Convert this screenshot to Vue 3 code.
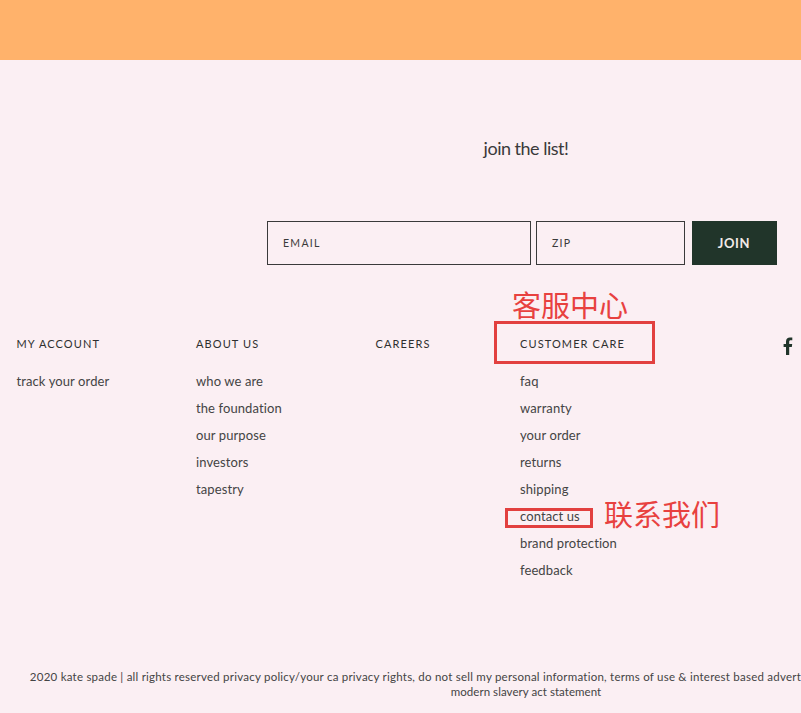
<template>
  <div class="page">
    <div class="banner"></div>
    <footer class="footer">
      <h2 class="join-title">join the list!</h2>
      <form class="join-form" @submit.prevent>
        <div class="field email">EMAIL</div>
        <div class="field zip">ZIP</div>
        <button class="join-btn" type="button">JOIN</button>
      </form>
      <div class="columns">
        <div v-for="col in columns" :key="col.title" class="col" :class="col.cls">
          <h3 class="col-title">{{ col.title }}</h3>
          <ul class="links">
            <li v-for="link in col.links" :key="link">{{ link }}</li>
          </ul>
        </div>
        <div class="social">
          <svg width="10" height="18" viewBox="0 0 10 18">
            <path d="M3 18V10H0.6V7H3V4.6C3 1.8 4.6 0.4 7 0.4C8 0.4 8.9 0.5 9.3 0.6V3.3H7.8C6.5 3.3 6.2 3.9 6.2 4.8V7H9.2L8.8 10H6.2V18Z" fill="#21352a" />
          </svg>
        </div>
      </div>
      <div class="legal">
        <p>2020 kate spade | all rights reserved privacy policy/your ca privacy rights, do not sell my personal information, terms of use &amp; interest based advertising, ca transparency in supply chains act,</p>
        <p class="legal-second">modern slavery act statement</p>
      </div>
    </footer>

    <!-- annotations drawn on top of the screenshot -->
    <div class="note note-service">客服中心</div>
    <div class="mark mark-service"></div>
    <div class="note note-contact">联系我们</div>
    <div class="mark mark-contact"></div>
  </div>
</template>

<script setup>
const columns = [
  { title: 'MY ACCOUNT', cls: 'account', links: ['track your order'] },
  { title: 'ABOUT US', cls: 'about', links: ['who we are', 'the foundation', 'our purpose', 'investors', 'tapestry'] },
  { title: 'CAREERS', cls: 'careers', links: [] },
  {
    title: 'CUSTOMER CARE',
    cls: 'care',
    links: ['faq', 'warranty', 'your order', 'returns', 'shipping', 'contact us', 'brand protection', 'feedback']
  }
]
</script>

<style>
html,
body {
  margin: 0;
  overflow: hidden;
  background: #fbeff3;
}
</style>

<style scoped>
.page {
  position: relative;
  width: 801px;
  height: 713px;
  overflow: hidden;
  background: #fbeff3;
  color: #3a3a3a;
  font-family: 'Lato', 'Liberation Sans', sans-serif;
}

.banner {
  height: 60px;
  background: #ffb26b;
}

.footer {
  width: 1052px;
}

.join-title {
  margin: 0;
  padding-top: 76px;
  text-align: center;
  font-size: 18px;
  line-height: 24px;
  font-weight: 400;
  letter-spacing: -0.5px;
}

.join-form {
  display: flex;
  margin-top: 61px;
  padding-left: 267px;
}

.field {
  box-sizing: border-box;
  height: 44px;
  border: 1px solid #3a3a3a;
  padding-left: 15px;
  font-size: 10.5px;
  line-height: 42px;
  letter-spacing: 1.3px;
}

.email {
  width: 264px;
}

.zip {
  width: 149px;
  margin-left: 5px;
}

.join-btn {
  width: 85px;
  height: 44px;
  margin-left: 7px;
  padding-right: 7px;
  border: 0;
  background: #21352a;
  color: #f3ebe8;
  font-family: inherit;
  font-size: 13px;
  font-weight: 700;
  letter-spacing: 0.6px;
}

.columns {
  display: flex;
  margin-top: 71px;
  padding-left: 16.5px;
}

.col-title {
  margin: 0 0 16px;
  font-size: 11px;
  line-height: 16px;
  font-weight: 400;
  letter-spacing: 1.1px;
  color: #2f2f2f;
}

.account,
.about {
  width: 179.5px;
}

.careers {
  width: 144.5px;
}

.care {
  width: 262.5px;
}

.links {
  margin: 0;
  padding: 0;
  list-style: none;
  font-size: 13px;
  line-height: 27px;
  letter-spacing: 0.1px;
  color: #444;
}

.social {
  padding-top: 1px;
}

.legal {
  margin-top: 85px;
  text-align: center;
  font-size: 11.5px;
  line-height: 15px;
  letter-spacing: 0.23px;
  white-space: nowrap;
  color: #444;
}

.legal p {
  margin: 0;
}

.legal-second {
  letter-spacing: 0.05px;
}

.note {
  position: absolute;
  color: #e8413f;
  font-family: 'Noto Sans CJK SC', sans-serif;
  font-size: 29px;
  line-height: 32px;
}

.note-service {
  left: 512px;
  top: 288px;
}

.note-contact {
  left: 604px;
  top: 497px;
}

.mark {
  position: absolute;
  box-sizing: border-box;
  border: 3px solid #e2403f;
}

.mark-service {
  left: 494px;
  top: 321px;
  width: 161px;
  height: 43px;
}

.mark-contact {
  left: 505px;
  top: 508px;
  width: 88px;
  height: 20px;
}
</style>
